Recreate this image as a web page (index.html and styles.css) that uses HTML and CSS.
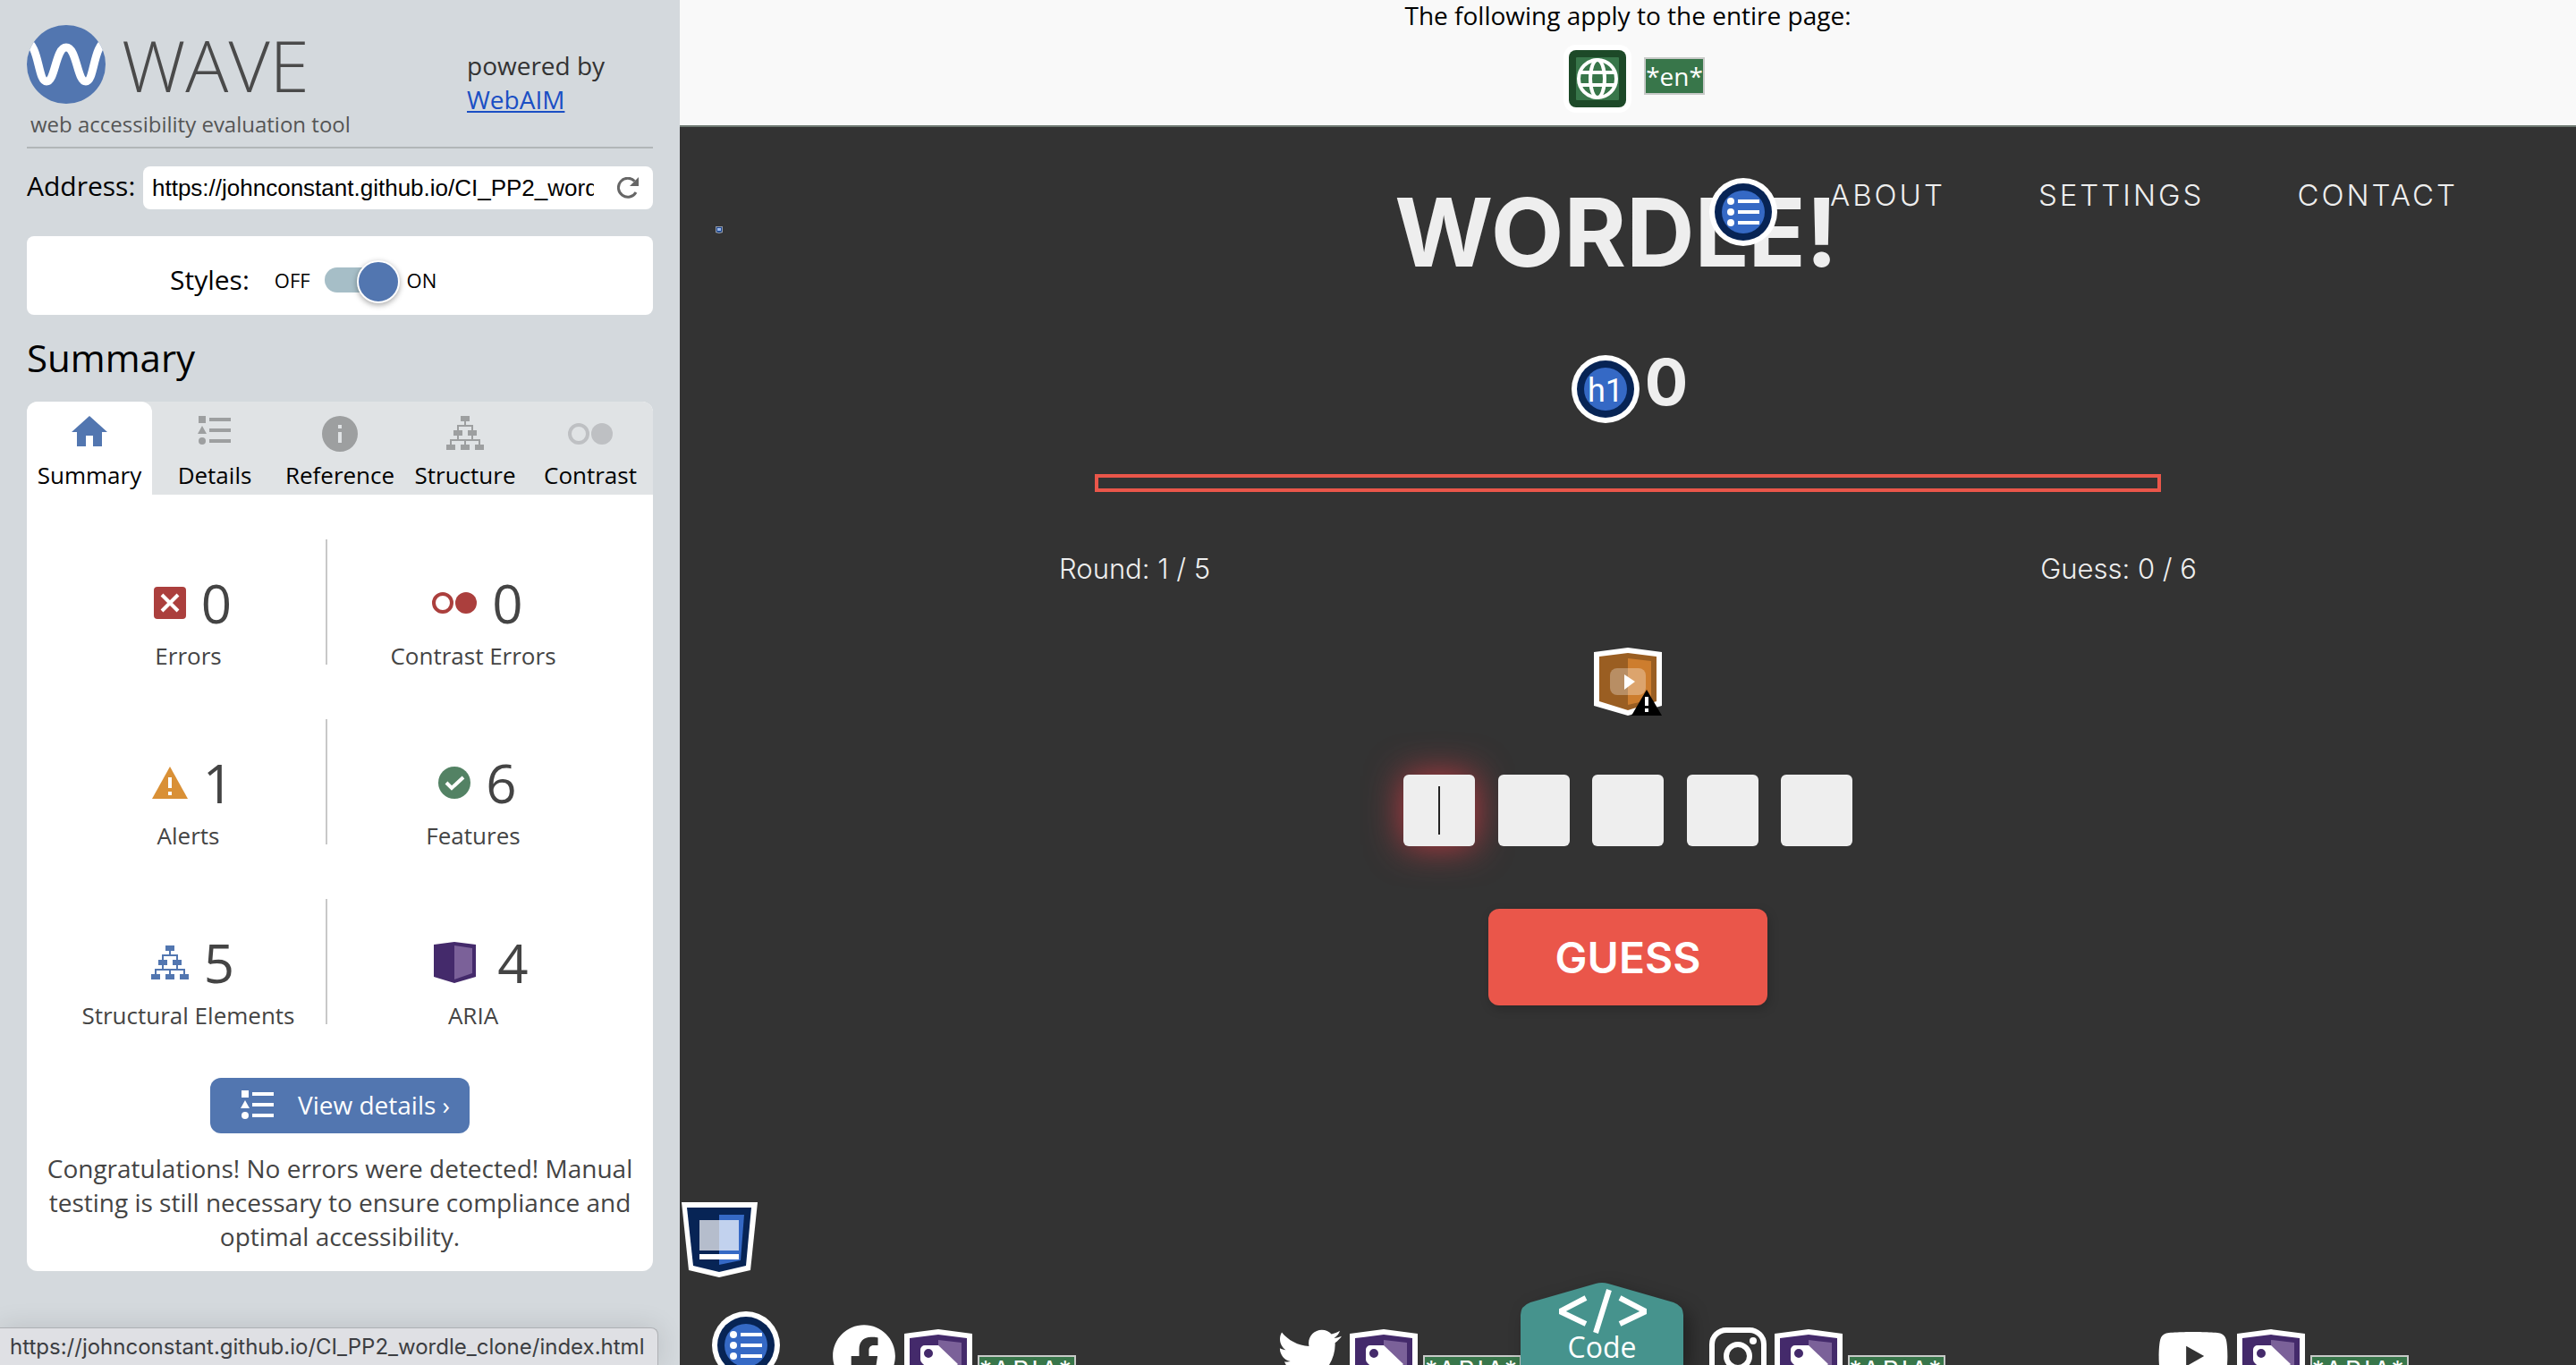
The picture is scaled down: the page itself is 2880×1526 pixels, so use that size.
FILE: index.html
```html
<!DOCTYPE html>
<html lang="en">
<head>
<meta charset="utf-8">
<title>WAVE report – Wordle!</title>
<link rel="stylesheet" href="styles.css">
</head>
<body>
<svg class="sprite" aria-hidden="true">
  <symbol id="i-list" viewBox="0 0 38 32"><path d="M1 0h8v8H1zM13 2h24v4H13zM5 11l5 9H0zM13 14h24v4H13zM13 26h24v4H13z"/><circle cx="5" cy="28" r="4"/></symbol>
  <symbol id="i-tree" viewBox="0 0 42 38"><path d="M16 0h10v6H16zM8 16h10v6H8zM24 16h10v6H24zM0 32h10v6H0zM16 32h10v6H16zM32 32h10v6H32z"/><path d="M21 6v5M13 16v-5h16v5M13 22v5M29 22v5M5 32v-5h32v5M21 27v5" fill="none" stroke="currentColor" stroke-width="2"/></symbol>
  <symbol id="i-contrast" viewBox="0 0 50 24"><circle cx="12" cy="12" r="10" fill="none" stroke="currentColor" stroke-width="4"/><circle cx="38" cy="12" r="12"/></symbol>
  <symbol id="i-ullist" viewBox="0 0 76 76"><circle cx="38" cy="38" r="38" fill="#fff"/><circle cx="38" cy="38" r="32" fill="#072455"/><circle cx="38" cy="38" r="24" fill="#3569c5"/><g fill="#fff"><circle cx="24" cy="26" r="4"/><circle cx="24" cy="38" r="4"/><circle cx="24" cy="50" r="4"/><path d="M32 24h24v4H32zM32 36h24v4H32zM32 48h24v4H32z"/></g></symbol>
  <symbol id="i-arialabel" viewBox="0 0 76 76"><path fill="#fff" d="M0 5 38 0l38 5v60L38 76 0 65z"/><path fill="#442a6b" d="M6 10 38 6l32 4v50L38 70 6 60z"/><path fill="#7b6199" d="m38 12 26 3v42l-26 7z"/><path fill="#fff" fill-rule="evenodd" d="M18 23a5 5 0 0 1 5-5h15l22 21-19 19-21-20q-2-2-2-4zM27 22a5 5 0 1 0 0 10 5 5 0 0 0 0-10z"/></symbol>
  <symbol id="i-landmark" viewBox="0 0 85 84"><path fill="#fff" d="M0 0h85l-8 76-35 8-34-8z"/><path fill="#072455" d="M6 6h72l-6 65-30 7-29-7z"/><path fill="#3569c5" d="M42 14h28l-4 51-24 5z"/><path fill="#fff" fill-opacity=".7" d="M20 20h44v34H20z"/><path fill="#fff" d="M20 58h44v6H20z"/></symbol>
</svg>

<aside class="sidebar">
  <header class="brand">
    <div class="brand-main">
      <div class="brand-logo">
        <svg class="wave-mark" viewBox="0 0 88 88" aria-hidden="true"><clipPath id="disc"><circle cx="44" cy="44" r="44"/></clipPath><circle cx="44" cy="44" r="44" fill="#5276b0"/><path clip-path="url(#disc)" d="M-2 18C14 20 12 63 22 63S32 25 44 25 56 63 66 63 74 20 90 18" fill="none" stroke="#fff" stroke-width="9"/></svg>
        <span class="wave-name">WAVE</span>
      </div>
      <p class="tagline">web accessibility evaluation tool</p>
    </div>
    <p class="powered">powered by<br><a href="#">WebAIM</a></p>
  </header>

  <form class="address">
    <label for="url">Address:</label>
    <div class="address-box">
      <input id="url" type="text" value="https://johnconstant.github.io/CI_PP2_wordle_clone/index.html">
      <button type="button" aria-label="Reload"><svg width="24" height="24" viewBox="0 0 24 24"><path d="M21 17A10.500 10.500 0 1 1 19.500 4.500" fill="none" stroke="#666" stroke-width="3"/><path d="M24 0v10H14z" fill="#666"/></svg></button>
    </div>
  </form>

  <div class="styles-card">
    <label for="styles-toggle">Styles:</label>
    <span class="off">OFF</span>
    <input id="styles-toggle" class="toggle" type="checkbox" role="switch" checked>
    <span class="on">ON</span>
  </div>

  <h2 class="section-title">Summary</h2>

  <section class="panel">
    <nav class="tabs">
      <button type="button" class="tab active"><span class="tab-icon top"><svg width="40" height="34" viewBox="0 0 40 34"><path d="m20 0 20 18h-6v16H24V22h-8v12H6V18H0z"/></svg></span>Summary</button>
      <button type="button" class="tab"><span class="tab-icon top"><svg width="38" height="32"><use href="#i-list"/></svg></span>Details</button>
      <button type="button" class="tab"><span class="tab-icon"><svg width="40" height="40" viewBox="0 0 40 40"><path fill-rule="evenodd" d="M20 0a20 20 0 1 0 0 40 20 20 0 0 0 0-40zM18 10h4v4h-4zM18 18h4v12h-4z"/></svg></span>Reference</button>
      <button type="button" class="tab"><span class="tab-icon top"><svg width="42" height="38"><use href="#i-tree"/></svg></span>Structure</button>
      <button type="button" class="tab"><span class="tab-icon pale"><svg width="50" height="24"><use href="#i-contrast"/></svg></span>Contrast</button>
    </nav>
    <div class="panel-body">
      <ul class="stats">
        <li><span class="count"><svg width="36" height="36" viewBox="0 0 36 36"><rect width="36" height="36" rx="4" fill="#ab3f3d"/><path d="m9 9 18 18M27 9 9 27" stroke="#fff" stroke-width="4"/></svg>0</span><span class="name">Errors</span></li>
        <li><span class="count"><svg class="red" width="50" height="24"><use href="#i-contrast"/></svg>0</span><span class="name">Contrast Errors</span></li>
        <li><span class="count"><svg width="40" height="36" viewBox="0 0 40 36"><path d="m20 0 20 36H0z" fill="#d99036"/><path d="M18 12h4v12h-4zM18 28h4v4h-4z" fill="#fff"/></svg>1</span><span class="name">Alerts</span></li>
        <li><span class="count"><svg width="36" height="36" viewBox="0 0 36 36"><circle cx="18" cy="18" r="18" fill="#538264"/><path d="m9 18 6 6 13-12" fill="none" stroke="#fff" stroke-width="4"/></svg>6</span><span class="name">Features</span></li>
        <li><span class="count"><svg class="blue" width="42" height="38"><use href="#i-tree"/></svg>5</span><span class="name">Structural Elements</span></li>
        <li><span class="count"><svg width="62" height="46" viewBox="-8 0 62 46"><path d="m23 0 24 3v36l-24 7-23-7V3z" fill="#442a6b"/><path d="m23 4 20 3v28l-20 7z" fill="#7b6199"/></svg>4</span><span class="name">ARIA</span></li>
      </ul>
      <button type="button" class="details"><svg width="38" height="32"><use href="#i-list"/></svg>View details ›</button>
      <p class="congrats">Congratulations! No errors were detected! Manual testing is still necessary to ensure compliance and optimal accessibility.</p>
    </div>
  </section>
</aside>

<main class="page">
  <div class="page-info">
    <p>The following apply to the entire page:</p>
    <div class="page-tags">
      <svg width="76" height="76" viewBox="0 0 76 76" role="img" aria-label="Language"><rect width="76" height="76" rx="14" fill="#fff"/><rect x="6" y="6" width="64" height="64" rx="8" fill="#1d4928"/><rect x="14" y="14" width="48" height="48" rx="1" fill="#38764a"/><g fill="none" stroke="#fff" stroke-width="4"><circle cx="38" cy="38" r="21"/><ellipse cx="38" cy="38" rx="8" ry="21"/><path d="M18 31h40M18 45h40"/></g></svg>
      <span class="lang">*en*</span>
    </div>
  </div>

  <div class="game">
    <header class="game-header">
      <h1 class="title">WORDLE!</h1>
      <nav class="menu"><a href="#">ABOUT</a><a href="#">SETTINGS</a><a href="#">CONTACT</a></nav>
      <svg class="marker menu-marker" width="76" height="76"><use href="#i-ullist"/></svg>
      <svg class="marker tiny-marker" width="8" height="8" viewBox="0 0 8 8"><path fill="#8f96a3" d="M0 0h8v7l-4 1-4-1z"/><path fill="#1c468f" d="M1 1h6v5l-3 1-3-1z"/><path fill="#9db9ea" d="M2 2h4v3H2z"/></svg>
    </header>

    <div class="score">
      <svg width="76" height="76" viewBox="0 0 76 76"><circle cx="38" cy="38" r="38" fill="#fff"/><circle cx="38" cy="38" r="32" fill="#072455"/><circle cx="38" cy="38" r="24" fill="#3569c5"/><text class="h1-text" x="38" y="52" text-anchor="middle">h1</text></svg>
      <span>0</span>
    </div>
    <div class="progress"></div>
    <div class="status"><span>Round: 1 / 5</span><span>Guess: 0 / 6</span></div>

    <svg class="media-alert" width="76" height="76" viewBox="0 0 76 76"><path fill="#fff" d="M0 5 38 0l38 5v60L38 76 0 65z"/><path fill="#9a5e22" d="M6 10 38 6l32 4v50L38 70 6 60z"/><path fill="#cd7d2e" d="m38 12 26 3v43l-26 6z"/><rect x="18" y="23" width="40" height="30" rx="8" fill="#fff" fill-opacity=".3"/><path fill="#fff" d="m34 30 12 8-12 9z"/><path fill="#000" d="m59 47 17 29H42z"/><path fill="#fff" d="M57 55h4v10h-4zM57 68h4v4h-4z"/></svg>

    <form class="guess">
      <div class="letters">
        <input class="current" type="text" maxlength="1" aria-label="Letter 1">
        <input type="text" maxlength="1" aria-label="Letter 2">
        <input type="text" maxlength="1" aria-label="Letter 3">
        <input type="text" maxlength="1" aria-label="Letter 4">
        <input type="text" maxlength="1" aria-label="Letter 5">
      </div>
      <button type="button">GUESS</button>
    </form>

    <footer class="social">
      <div class="social-item"><svg width="72" height="72" viewBox="0 0 512 512"><path fill="#fff" d="M504 256C504 119 393 8 256 8S8 119 8 256c0 123.780 90.690 226.380 209.250 245V327.690h-63V256h63v-54.640c0-62.150 37-96.480 93.670-96.480 27.140 0 55.520 4.840 55.520 4.840v61h-31.280c-30.800 0-40.410 19.120-40.410 38.730V256h68.780l-11 71.690h-57.780V501C413.310 482.380 504 379.780 504 256z"/></svg><svg class="tag" width="76" height="76"><use href="#i-arialabel"/></svg><span class="aria">*ARIA*</span></div>
      <div class="social-item"><svg width="72" height="72" viewBox="0 0 512 512"><path fill="#fff" d="M459.370 151.716c.325 4.548.325 9.097.325 13.645 0 138.720-105.583 298.558-298.558 298.558-59.452 0-114.680-17.219-161.137-47.106 8.447.974 16.568 1.299 25.340 1.299 49.055 0 94.213-16.568 130.274-44.832-46.132-.975-84.792-31.188-98.112-72.772 6.498.974 12.995 1.624 19.818 1.624 9.421 0 18.843-1.300 27.614-3.573-48.081-9.747-84.143-51.980-84.143-102.985v-1.299c13.969 7.797 30.214 12.670 47.431 13.319-28.264-18.843-46.781-51.005-46.781-87.391 0-19.492 5.197-37.360 14.294-52.954 51.655 63.675 129.300 105.258 216.365 109.807-1.624-7.797-2.599-15.918-2.599-24.040 0-57.828 46.782-104.934 104.934-104.934 30.213 0 57.502 12.670 76.670 33.137 23.715-4.548 46.456-13.320 66.599-25.340-7.798 24.366-24.366 44.833-46.132 57.827 21.117-2.273 41.584-8.122 60.426-16.243-14.292 20.791-32.161 39.308-52.628 54.253z"/></svg><svg class="tag" width="76" height="76"><use href="#i-arialabel"/></svg><span class="aria">*ARIA*</span></div>
      <div class="social-item"><svg width="64" height="72" viewBox="0 0 64 72"><rect x="3" y="7" width="58" height="58" rx="16" fill="none" stroke="#fff" stroke-width="6"/><circle cx="32" cy="36" r="13" fill="none" stroke="#fff" stroke-width="6"/><circle cx="49" cy="19" r="4" fill="#fff"/></svg><svg class="tag" width="76" height="76"><use href="#i-arialabel"/></svg><span class="aria">*ARIA*</span></div>
      <div class="social-item"><svg width="80" height="72" viewBox="6 0 564 512"><path fill="#fff" d="M549.655 124.083c-6.281-23.650-24.787-42.276-48.284-48.597C458.781 64 288 64 288 64S117.220 64 74.629 75.486c-23.497 6.322-42.003 24.947-48.284 48.597-11.412 42.867-11.412 132.305-11.412 132.305s0 89.438 11.412 132.305c6.281 23.650 24.787 41.500 48.284 47.821C117.220 448 288 448 288 448s170.780 0 213.371-11.486c23.497-6.321 42.003-24.171 48.284-47.821 11.412-42.867 11.412-132.305 11.412-132.305s0-89.438-11.412-132.305zm-317.510 213.508V175.185l142.739 81.205-142.739 81.201z"/></svg><svg class="tag" width="76" height="76"><use href="#i-arialabel"/></svg><span class="aria">*ARIA*</span></div>
    </footer>

    <svg class="marker footer-landmark" width="85" height="84"><use href="#i-landmark"/></svg>
    <svg class="marker footer-list" width="76" height="76"><use href="#i-ullist"/></svg>
    <button type="button" class="code-tab">
      <svg class="code-shape" width="182" height="92" viewBox="0 0 182 92" aria-hidden="true"><path fill="#46938d" d="M0 92V36q0-10 11-14L84 1q7-2 14 0l73 21q11 4 11 14v56z"/><path d="M73 17 46 31v2l27 13M111 17l27 14v2l-27 13M99 8 84 56" fill="none" stroke="#fff" stroke-width="6"/></svg>
      <span>Code</span>
    </button>
  </div>
</main>

<div class="link-status">https://johnconstant.github.io/CI_PP2_wordle_clone/index.html</div>
</body>
</html>
```

FILE: styles.css
```css
* { box-sizing: border-box; }

body {
  margin: 0;
  display: flex;
  height: 100vh;
  overflow: hidden;
  font-family: "Open Sans", "Noto Sans", sans-serif;
  font-size: 28px;
  line-height: 38px;
  color: #000;
  background: #333;
}

p, h1, h2, ul { margin: 0; padding: 0; }
button, input { font: inherit; color: inherit; }
button { border: 0; cursor: pointer; }
svg { display: block; flex: none; fill: currentColor; }
.sprite { position: absolute; width: 0; height: 0; }

/* Sidebar */
.sidebar {
  flex: none;
  width: 760px;
  padding: 28px 30px 0;
  background: #d4d9dd;
}

.brand {
  display: flex;
  justify-content: space-between;
  padding-bottom: 9px;
  border-bottom: 2px solid #b1b6b8;
}
.brand-logo { display: flex; align-items: center; gap: 18px; }
.wave-mark { width: 88px; height: 88px; }
.wave-name { font-size: 80px; line-height: 88px; font-weight: 300; color: #4a4a4a; }
.tagline { margin: 7px 0 0 4px; font-size: 24px; line-height: 32px; color: #555; }
.powered { width: 208px; padding-top: 26px; color: #333; }
.powered a { color: #1a4fc4; }

.address { display: flex; justify-content: space-between; margin-top: 20px; }
.address label { font-size: 30px; line-height: 44px; }
.address-box {
  display: flex;
  align-items: center;
  gap: 26px;
  width: 570px;
  height: 48px;
  padding: 0 16px 0 10px;
  border-radius: 8px;
  background: #fff;
}
.address-box input {
  flex: 1;
  min-width: 0;
  padding: 0;
  border: 0;
  outline: 0;
  background: none;
  font: 26px/40px "Liberation Sans", sans-serif;
}
.address-box button { padding: 0; background: none; }

.styles-card {
  display: flex;
  align-items: center;
  height: 88px;
  margin-top: 30px;
  padding: 10px 0 0 160px;
  border-radius: 8px;
  background: #fff;
  font-size: 22px;
}
.styles-card label { margin-right: 28px; font-size: 30px; }
.toggle {
  position: relative;
  width: 80px;
  height: 28px;
  margin: 0 12px 0 16px;
  appearance: none;
  border-radius: 14px;
  background: #a6bec7;
}
.toggle::before {
  content: "";
  position: absolute;
  top: -8px;
  right: -4px;
  width: 44px;
  height: 44px;
  border: 2px solid #fff;
  border-radius: 50%;
  background: #5276b0;
  box-shadow: 0 2px 6px rgba(0, 0, 0, .35);
}

.section-title { margin: 18px 0 19px; font-size: 42px; line-height: 60px; font-weight: 400; }

.panel { border-radius: 12px; background: #fff; }
.tabs {
  display: grid;
  grid-template-columns: repeat(5, 1fr);
  border-radius: 12px 12px 0 0;
  background: #e0e3e5;
}
.tab {
  display: flex;
  flex-direction: column;
  align-items: center;
  gap: 8px;
  padding: 16px 0 4px;
  border-radius: 12px 12px 0 0;
  background: none;
  font-size: 26px;
  line-height: 36px;
}
.tab.active { background: #fff; }
.tab-icon { display: flex; align-items: center; height: 40px; color: #9d9fa0; }
.tab-icon.top { align-items: flex-start; }
.tab-icon.pale { color: #bec0c3; }
.active .tab-icon { color: #5276b0; }

.panel-body {
  display: flex;
  flex-direction: column;
  align-items: center;
  padding: 50px 20px 20px;
  text-align: center;
  color: #444;
}
.stats {
  display: grid;
  grid-template-columns: 312px 326px;
  row-gap: 61px;
  padding-right: 14px;
  list-style: none;
}
.stats li { height: 140px; padding-top: 41px; }
.stats li:nth-child(odd) { padding-left: 3px; border-right: 2px solid #c8c8c8; }
.count {
  display: flex;
  align-items: center;
  justify-content: center;
  gap: 17px;
  padding-left: 10px;
  font-size: 60px;
  line-height: 60px;
}
.name { display: block; margin-top: 11px; font-size: 26px; line-height: 36px; }
.red { color: #ab3f3d; }
.blue { color: #5276b0; }
.details {
  display: flex;
  align-items: center;
  gap: 26px;
  width: 290px;
  height: 62px;
  margin: 60px 0 20px;
  padding: 0 0 2px 34px;
  border-radius: 12px;
  background: #5276b0;
  color: #fff;
  white-space: nowrap;
}

.link-status {
  position: absolute;
  left: 0;
  bottom: 0;
  height: 42px;
  padding: 0 15px 0 11px;
  border: 1px solid #aeb0b4;
  border-width: 1px 1px 0 0;
  border-radius: 0 8px 0 0;
  background: #dfe0e4;
  box-shadow: 0 0 30px rgba(0, 0, 0, .12);
  color: #3c3e42;
  font: 24px/42px Inter, sans-serif;
}

/* Evaluated page */
.page {
  flex: 1;
  min-width: 0;
  display: flex;
  flex-direction: column;
}
.page-info {
  height: 142px;
  border-bottom: 2px solid #6f7a73;
  background: #f9f9f9;
  text-align: center;
}
.page-info p { line-height: 34px; }
.page-tags {
  display: flex;
  justify-content: center;
  gap: 14px;
  margin-top: 16px;
  padding-left: 14px;
}
.lang, .aria {
  border: 2px solid #c8cac8;
  background: #38764a;
  color: #fff;
}
.lang { height: 42px; margin-top: 14px; }

.game {
  position: relative;
  flex: 1;
  display: flex;
  flex-direction: column;
  align-items: center;
  overflow: hidden;
  color: #eee;
  font-family: Inter, sans-serif;
}
.game-header { width: 100%; padding: 58px 26px 0 0; text-align: center; }
.title { font-size: 106px; line-height: 120px; font-weight: 700; }
.menu {
  position: absolute;
  top: 54px;
  right: 132px;
  display: flex;
  gap: 104px;
  font-size: 33px;
  line-height: 44px;
  font-weight: 300;
  letter-spacing: 3px;
}
.menu a { color: #eee; text-decoration: none; }
.marker { position: absolute; }
.menu-marker { top: 57px; right: 893px; }
.tiny-marker { top: 111px; left: 40px; }

.score {
  display: flex;
  gap: 6px;
  margin-top: 77px;
  padding-left: 4px;
  font-size: 72px;
  line-height: 60px;
  font-weight: 700;
}
.h1-text { font: 36px Roboto, sans-serif; fill: #fff; }
.progress {
  width: 56.2%;
  height: 20px;
  margin-top: 57px;
  border: 4px solid #ea564a;
}
.status {
  display: flex;
  justify-content: space-between;
  width: 60%;
  margin-top: 64px;
  font-size: 31px;
  line-height: 44px;
  font-weight: 300;
}
.media-alert { margin: 66px 0; }
.guess { display: flex; flex-direction: column; align-items: center; }
.letters { display: flex; justify-content: space-between; width: 502px; }
.letters input {
  width: 80px;
  height: 80px;
  border: 0;
  border-radius: 6px;
  background: #eee;
  color: #222;
  text-align: center;
}
.letters .current {
  background: linear-gradient(#222, #222) 50% 50% / 2px 54px no-repeat #eee;
  box-shadow: 0 0 40px rgba(225, 60, 70, .8);
}
.guess button {
  width: 312px;
  height: 108px;
  margin-top: 70px;
  padding: 2px 0 0;
  border-radius: 12px;
  background: #ea564a;
  box-shadow: 2px 4px 12px rgba(0, 0, 0, .2);
  color: #fff;
  font-size: 48px;
  font-weight: 600;
}

.social {
  display: grid;
  grid-template-columns: 498fr 482fr 501fr 468fr;
  width: 100%;
  height: 46px;
  margin-top: auto;
  padding-left: 170px;
}
.social-item { display: flex; align-items: flex-start; }
.tag { margin: 6px 6px 0 9px; }
.aria {
  margin-top: 35px;
  line-height: 30px;
  letter-spacing: 3px;
}

.footer-landmark { left: 2px; bottom: 98px; }
.footer-list { left: 36px; bottom: -16px; }
.code-tab {
  position: absolute;
  left: 940px;
  bottom: 0;
  display: grid;
  width: 182px;
  height: 92px;
  padding: 0;
  background: none;
  color: #fff;
  font: 32px/32px "Open Sans", sans-serif;
}
.code-tab > * { grid-area: 1 / 1; }
.code-tab span { z-index: 1; align-self: end; padding-bottom: 4px; }
.code-shape { filter: drop-shadow(8px 8px 10px rgba(0, 0, 0, .35)); }
```
